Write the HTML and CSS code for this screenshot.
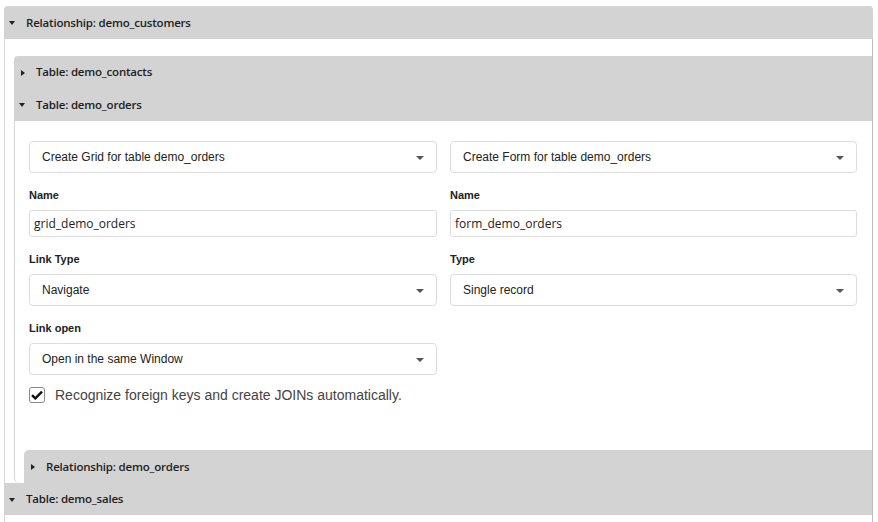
FILE: index.html
```html
<!DOCTYPE html>
<html>
<head>
    <title>Relationships</title>
    <link rel="stylesheet" href="styles.css">
</head>
<body>
    <div class="panel outer">
        <div class="panel-head open">Relationship: demo_customers</div>
        <div class="panel-body outer-body">
            <div class="panel-head short">Table: demo_contacts</div>
            <div class="panel-head open">Table: demo_orders</div>
            <div class="panel-body inner-body">
                <form class="grid-form">
                    <div class="field">
                        <div class="select">Create Grid for table demo_orders</div>
                    </div>
                    <div class="field">
                        <div class="select">Create Form for table demo_orders</div>
                    </div>
                    <div class="field">
                        <label>Name</label>
                        <input type="text" value="grid_demo_orders">
                    </div>
                    <div class="field">
                        <label>Name</label>
                        <input type="text" value="form_demo_orders">
                    </div>
                    <div class="field">
                        <label>Link Type</label>
                        <div class="select">Navigate</div>
                    </div>
                    <div class="field">
                        <label>Type</label>
                        <div class="select">Single record</div>
                    </div>
                    <div class="field">
                        <label>Link open</label>
                        <div class="select">Open in the same Window</div>
                    </div>
                    <div class="field"></div>
                    <div class="check-row">
                        <span class="checkbox">
                            <svg width="12" height="10" viewBox="0 0 12 10"><path d="M1 5.2 L4.3 8.4 L11 1.6" fill="none" stroke="#111" stroke-width="2.4"/></svg>
                        </span>
                        Recognize foreign keys and create JOINs automatically.
                    </div>
                </form>
                <div class="panel-head sub">Relationship: demo_orders</div>
            </div>
            <div class="panel-head open sales">Table: demo_sales</div>
        </div>
    </div>
</body>
</html>
```

FILE: styles.css
```css
body {
    margin: 0;
    background-color: #fff;
    font-family: "Liberation Sans", Arial, sans-serif;
    color: #333;
}

.outer {
    margin: 6px 5px 0 4px;
}

.panel-head {
    height: 33px;
    line-height: 33px;
    background-color: #d3d3d3;
    font-family: "Open Sans", sans-serif;
    font-size: 11.5px;
    font-weight: 600;
    color: #1e1e1e;
    padding-left: 22px;
    position: relative;
    letter-spacing: -0.2px;
}

.panel-head.short {
    height: 32px;
    line-height: 32px;
}

.outer > .panel-head {
    border-radius: 4px 4px 0 0;
}

.panel-head::before {
    content: "";
    position: absolute;
    left: 7px;
    top: 14px;
    border-top: 3px solid transparent;
    border-bottom: 3px solid transparent;
    border-left: 4px solid #222;
}

.panel-head.open::before {
    left: 5px;
    top: 15px;
    border-left: 3px solid transparent;
    border-right: 3px solid transparent;
    border-top: 4px solid #222;
    border-bottom: none;
}

.outer-body {
    border-left: 1px solid #d6d6d6;
    border-right: 1px solid #bdbdbd;
    padding: 17px 0 8px 9px;
}

.outer-body > .panel-head:first-child {
    border-radius: 4px 0 0 0;
}

.inner-body {
    border-left: 1px solid #d6d6d6;
    border-bottom-left-radius: 5px;
    padding: 20px 0 0 9px;
}

.grid-form {
    display: grid;
    grid-template-columns: 408px 407px;
    column-gap: 13px;
    row-gap: 16px;
    padding-left: 5px;
}

.field label {
    display: block;
    font-size: 11px;
    font-weight: bold;
    color: #222;
    height: 13px;
    line-height: 13px;
    margin-bottom: 8px;
}

.select {
    height: 30px;
    line-height: 30px;
    border: 1px solid #ddd;
    border-radius: 4px;
    padding-left: 12px;
    font-size: 12px;
    color: #222;
    position: relative;
}

.select::after {
    content: "";
    position: absolute;
    right: 12px;
    top: 14px;
    border-left: 4px solid transparent;
    border-right: 4px solid transparent;
    border-top: 4px solid #555;
}

.field input {
    display: block;
    box-sizing: border-box;
    width: 100%;
    height: 27px;
    margin: 0;
    border: 1px solid #ddd;
    border-radius: 3px;
    padding: 0 4px;
    font-family: "Open Sans", sans-serif;
    font-size: 12px;
    color: #222;
}

.check-row {
    grid-column: 1 / 3;
    display: flex;
    align-items: center;
    gap: 10px;
    font-size: 14px;
    color: #444;
    margin-top: -4px;
    height: 16px;
}

.checkbox {
    box-sizing: border-box;
    width: 16px;
    height: 16px;
    border: 1px solid #888;
    border-radius: 3px;
    display: flex;
    align-items: center;
    justify-content: center;
}

.panel-head.sub {
    margin-top: 47px;
    border-top-left-radius: 5px;
}

.panel-head.sales {
    margin-left: -10px;
    height: 32px;
    line-height: 32px;
}
```
